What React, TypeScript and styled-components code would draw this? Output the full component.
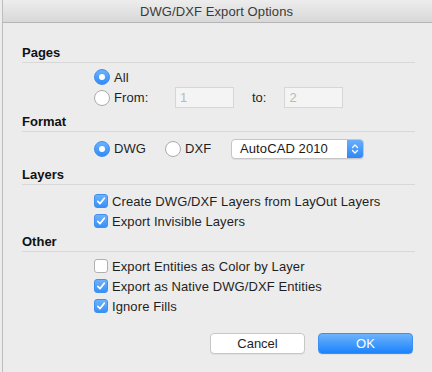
import React from "react";
import styled, { createGlobalStyle } from "styled-components";

const Global = createGlobalStyle`
  html, body { margin: 0; padding: 0; background: #ececec; }
  body { font-family: "Liberation Sans", Arial, sans-serif; font-size: 13px; color: #1f1f1f; }
`;

const Window = styled.div`
  margin-left: 2px;
  width: 430px;
  height: 372px;
  border-left: 1px solid #bdbdbd;
  background: #ececec;
  box-sizing: border-box;
`;

const TitleBar = styled.div`
  height: 23px;
  box-sizing: border-box;
  border-top-left-radius: 5px;
  background: linear-gradient(#ededed, #d8d8d8);
  border-bottom: 1px solid #b4b4b4;
  display: flex;
  align-items: center;
  justify-content: center;
  padding-right: 2px;
  font-size: 13px;
  color: #3a3a3a;
  letter-spacing: 0.1px;
`;

const Body = styled.div`
  padding: 22px 17px 0 19px;
  display: flex;
  flex-direction: column;
`;

const Section = styled.div<{ $gap: number }>`
  display: flex;
  flex-direction: column;
  margin-top: ${(p) => p.$gap}px;
`;

const Heading = styled.div`
  font-weight: bold;
  font-size: 13px;
  line-height: 16px;
  color: #111;
  padding-bottom: 1px;
  border-bottom: 1px solid #d8d8d8;
`;

const Rows = styled.div<{ $top: number }>`
  display: flex;
  flex-direction: column;
  padding-left: 72px;
  padding-top: ${(p) => p.$top}px;
`;

const Row = styled.div<{ $h?: number }>`
  display: flex;
  align-items: center;
  height: ${(p) => p.$h ?? 20}px;
`;

const Radio = styled.span<{ $on?: boolean }>`
  width: 16px;
  height: 16px;
  box-sizing: border-box;
  border-radius: 50%;
  flex: none;
  display: flex;
  align-items: center;
  justify-content: center;
  background: ${(p) => (p.$on ? "linear-gradient(#6db3fb, #2f8cf8)" : "#fff")};
  border: 1px solid ${(p) => (p.$on ? "#3b8ef0" : "#ababab")};
  &::after {
    content: "";
    width: 6px;
    height: 6px;
    border-radius: 50%;
    background: #fff;
    display: ${(p) => (p.$on ? "block" : "none")};
  }
`;

const Check = styled.span<{ $on?: boolean }>`
  width: 14px;
  height: 14px;
  box-sizing: border-box;
  border-radius: 3px;
  flex: none;
  display: flex;
  align-items: center;
  justify-content: center;
  background: ${(p) => (p.$on ? "linear-gradient(#6db3fb, #3790f8)" : "#fff")};
  border: 1px solid ${(p) => (p.$on ? "#3f8ff0" : "#b0b0b0")};
`;

const Label = styled.span<{ $w?: number }>`
  margin-left: 4px;
  white-space: nowrap;
  letter-spacing: 0.1px;
  ${(p) => (p.$w ? `width: ${p.$w}px;` : "")}
`;

const Field = styled.div`
  width: 59px;
  height: 21px;
  box-sizing: border-box;
  border: 1px solid #d6d6d6;
  background: #f4f4f4;
  color: #b9b9b9;
  padding: 2px 0 0 4px;
  line-height: 16px;
`;

const ToLabel = styled.span`
  margin: 0 18px 0 18px;
`;

const Select = styled.div`
  width: 133px;
  height: 20px;
  box-sizing: border-box;
  border: 1px solid #c6c6c6;
  border-radius: 4px;
  background: #fff;
  display: flex;
  align-items: stretch;
  overflow: hidden;
  box-shadow: 0 1px 0 rgba(0, 0, 0, 0.06);
`;

const SelectText = styled.span`
  flex: 1;
  padding-left: 8px;
  line-height: 18px;
  color: #1a1a1a;
  letter-spacing: 0.1px;
`;

const Stepper = styled.span`
  width: 16px;
  background: linear-gradient(#69aefb, #2d88f7);
  display: flex;
  align-items: center;
  justify-content: center;
`;

const Buttons = styled.div`
  display: flex;
  justify-content: flex-end;
  gap: 13px;
  padding: 17px 2px 0 0;
`;

const Button = styled.div<{ $primary?: boolean }>`
  width: 95px;
  height: 21px;
  box-sizing: border-box;
  border-radius: 4px;
  display: flex;
  align-items: center;
  justify-content: center;
  font-size: 13px;
  color: ${(p) => (p.$primary ? "#fff" : "#1f1f1f")};
  background: ${(p) => (p.$primary ? "linear-gradient(#6db4fb, #1c83fb)" : "#fff")};
  border: 1px solid ${(p) => (p.$primary ? "#3c8ef2" : "#c7c7c7")};
  box-shadow: 0 1px 0 rgba(0, 0, 0, 0.05);
`;

const Tick = () => (
  <svg width="10" height="10" viewBox="0 0 10 10">
    <path d="M1.8 5.3 L4 7.6 L8.3 2.2" fill="none" stroke="#fff" strokeWidth="1.7" strokeLinecap="round" strokeLinejoin="round" />
  </svg>
);

const Arrows = () => (
  <svg width="8" height="12" viewBox="0 0 8 12">
    <path d="M1.5 4.5 L4 2 L6.5 4.5 M1.5 7.5 L4 10 L6.5 7.5" fill="none" stroke="#fff" strokeWidth="1.3" strokeLinecap="round" strokeLinejoin="round" />
  </svg>
);

const CheckRow = ({ on, children }: { on?: boolean; children: React.ReactNode }) => (
  <Row>
    <Check $on={on}>{on && <Tick />}</Check>
    <Label>{children}</Label>
  </Row>
);

export default function App() {
  return (
    <>
      <Global />
      <Window>
        <TitleBar>DWG/DXF Export Options</TitleBar>
        <Body>
          <Section $gap={0}>
            <Heading>Pages</Heading>
            <Rows $top={4}>
              <Row>
                <Radio $on />
                <Label>All</Label>
              </Row>
              <Row $h={21}>
                <Radio />
                <Label $w={61}>From:</Label>
                <Field>1</Field>
                <ToLabel>to:</ToLabel>
                <Field>2</Field>
              </Row>
            </Rows>
          </Section>
          <Section $gap={6}>
            <Heading>Format</Heading>
            <Rows $top={6}>
              <Row $h={21}>
                <Radio $on />
                <Label $w={51}>DWG</Label>
                <Radio />
                <Label $w={46}>DXF</Label>
                <Select>
                  <SelectText>AutoCAD 2010</SelectText>
                  <Stepper>
                    <Arrows />
                  </Stepper>
                </Select>
              </Row>
            </Rows>
          </Section>
          <Section $gap={8}>
            <Heading>Layers</Heading>
            <Rows $top={6}>
              <CheckRow on>Create DWG/DXF Layers from LayOut Layers</CheckRow>
              <CheckRow on>Export Invisible Layers</CheckRow>
            </Rows>
          </Section>
          <Section $gap={3}>
            <Heading>Other</Heading>
            <Rows $top={4}>
              <CheckRow>Export Entities as Color by Layer</CheckRow>
              <CheckRow on>Export as Native DWG/DXF Entities</CheckRow>
              <CheckRow on>Ignore Fills</CheckRow>
            </Rows>
          </Section>
          <Buttons>
            <Button>Cancel</Button>
            <Button $primary>OK</Button>
          </Buttons>
        </Body>
      </Window>
    </>
  );
}
